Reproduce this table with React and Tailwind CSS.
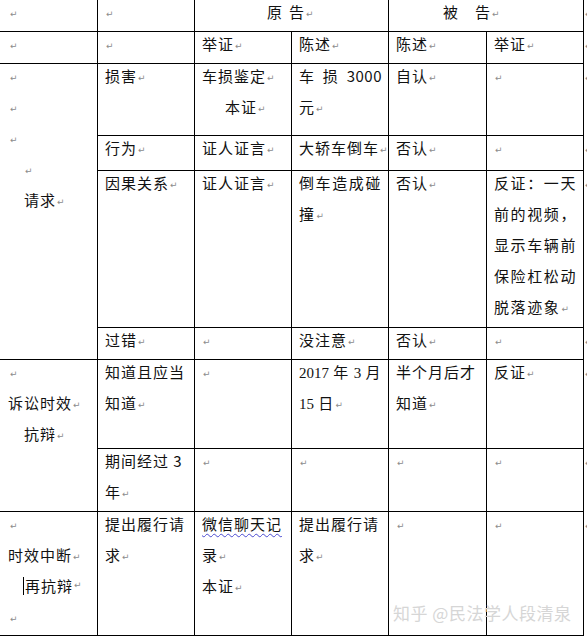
import clsx from 'clsx';

// paragraph mark as Word shows it
function P() {
  return (
    <span className="ml-[1px] inline-block align-[1px] font-['DejaVu_Sans',sans-serif] text-[9px] leading-none tracking-normal text-[#8c8c8c]">
      ↵
    </span>
  );
}

function L({ className, children }) {
  return <div className={clsx('h-[31px] whitespace-nowrap', className)}>{children}</div>;
}

function Cell({ className, children }) {
  return (
    <div className={clsx('border-r border-b border-black pl-[7px]', className)}>
      <div className="-mt-1">{children}</div>
    </div>
  );
}

function End({ className }) {
  return (
    <div className={clsx('col-start-7 -mt-1 overflow-hidden', className)}>
      <L>
        <P />
      </L>
    </div>
  );
}

function Num({ children }) {
  return <span className="font-['Liberation_Serif',serif] text-[15px] tracking-normal">{children}</span>;
}

function Empty({ className }) {
  return (
    <Cell className={className}>
      <L>
        <P />
      </L>
    </Cell>
  );
}

function Text({ className, lines }) {
  return (
    <Cell className={className}>
      {lines.map((line, i) => (
        <L key={i}>
          {line}
          {i === lines.length - 1 && <P />}
        </L>
      ))}
    </Cell>
  );
}

export default function App() {
  return (
    <div className="relative h-[638px] w-[587px] overflow-hidden bg-white font-['Noto_Sans_CJK_SC',sans-serif] text-[15px] leading-[31px] tracking-[1px] text-[#111]">
      <div className="grid grid-cols-[98px_97px_97px_97px_98px_97px_4px] grid-rows-[32px_32px_72px_35px_157px_32px_89px_63px_124px]">
        {/* row 1 */}
        <Empty className="pl-[9px]" />
        <Empty />
        <Cell className="col-span-2 pl-[72px]">
          <L>
            原<span className="inline-block w-[6px]" />告<P />
          </L>
        </Cell>
        <Cell className="col-span-2 pl-[54px]">
          <L>
            被<span className="inline-block w-[16px]" />告<P />
          </L>
        </Cell>
        <End className="row-start-1" />

        {/* row 2 */}
        <Empty className="pl-[9px]" />
        <Empty />
        <Text lines={['举证']} />
        <Text lines={['陈述']} />
        <Text lines={['陈述']} />
        <Text lines={['举证']} />
        <End className="row-start-2" />

        {/* row 3 */}
        <Cell className="row-span-4 pl-[9px]">
          <L><P /></L>
          <L><P /></L>
          <L><P /></L>
          <L className="pl-[15px]"><P /></L>
          <L className="pl-[15px]">请求<P /></L>
        </Cell>
        <Text lines={['损害']} />
        <Cell>
          <L>车损鉴定<P /></L>
          <L className="pl-[23px]">本证<P /></L>
        </Cell>
        <Cell className="pr-[6px]">
          <L className="flex justify-between">
            <span>车</span>
            <span>损</span>
            <span className="tracking-[0.5px]">3000</span>
          </L>
          <L>元<P /></L>
        </Cell>
        <Text lines={['自认']} />
        <Empty />
        <End className="row-start-3" />

        {/* row 4 */}
        <Text lines={['行为']} />
        <Text lines={['证人证言']} />
        <Text lines={['大轿车倒车']} />
        <Text lines={['否认']} />
        <Empty />
        <End className="row-start-4" />

        {/* row 5 */}
        <Text lines={['因果关系']} />
        <Text lines={['证人证言']} />
        <Text className="tracking-[1.6px]" lines={['倒车造成碰', '撞']} />
        <Text lines={['否认']} />
        <Text
          className="tracking-[1.6px]"
          lines={['反证：一天', '前的视频，', '显示车辆前', '保险杠松动', '脱落迹象']}
        />
        <End className="row-start-5" />

        {/* row 6 */}
        <Text lines={['过错']} />
        <Empty />
        <Text lines={['没注意']} />
        <Text lines={['否认']} />
        <Empty />
        <End className="row-start-6" />

        {/* row 7 */}
        <Cell className="row-span-2 pl-[8px]">
          <L className="pl-[1px]"><P /></L>
          <L>诉讼时效<P /></L>
          <L className="pl-[16px]">抗辩<P /></L>
        </Cell>
        <Text lines={['知道且应当', '知道']} />
        <Empty />
        <Cell>
          <L>
            <Num>2017</Num> 年 <Num>3</Num> 月
          </L>
          <L>
            <Num>15</Num> 日<P />
          </L>
        </Cell>
        <Text lines={['半个月后才', '知道']} />
        <Text lines={['反证']} />
        <End className="row-start-7" />

        {/* row 8 */}
        <Cell>
          <L>期间经过 3</L>
          <L>年<P /></L>
        </Cell>
        <Empty />
        <Empty />
        <Empty />
        <Empty />
        <End className="row-start-8" />

        {/* row 9 */}
        <Cell className="pl-[8px]">
          <L className="pl-[1px]"><P /></L>
          <L>时效中断<P /></L>
          <L className="flex items-center pl-[15px]">
            <span className="mr-[1px] inline-block h-[18px] border-l border-black" />
            再抗辩<P />
          </L>
          <L className="pl-[1px]"><P /></L>
        </Cell>
        <Text lines={['提出履行请', '求']} />
        <Cell>
          <L>
            <span className="underline decoration-[#4a4ad0] decoration-wavy decoration-1 underline-offset-[3px]">
              微信聊天记
            </span>
          </L>
          <L>录<P /></L>
          <L>本证<P /></L>
        </Cell>
        <Text lines={['提出履行请', '求']} />
        <Empty />
        <Empty />
        <End className="row-start-9" />
      </div>

      {/* site watermark */}
      <div className="absolute left-[393px] top-[600px] whitespace-nowrap text-[17px] leading-[26px] tracking-[0.5px] text-[#d6d6d6]">
        知乎 @民法学人段清泉
      </div>
    </div>
  );
}
